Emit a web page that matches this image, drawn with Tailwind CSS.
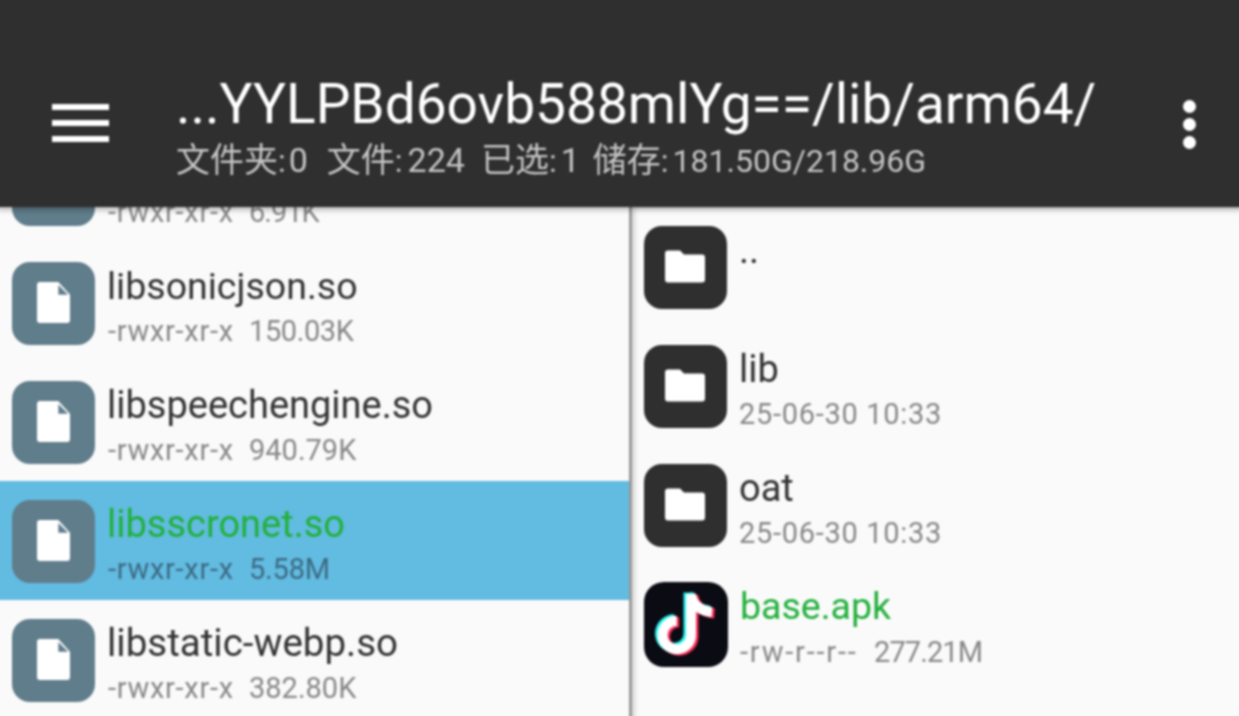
<!DOCTYPE html>
<html>
<head>
<meta charset="utf-8">
<script src="https://cdn.jsdelivr.net/npm/@tailwindcss/browser@4"></script>
</head>
<body class="m-0 overflow-hidden bg-[#fafafa]">
<div class="w-[1239px] h-[716px] overflow-hidden">
<div class="w-[1247px] h-[724px] -m-[4px] overflow-hidden flex flex-col bg-[#fafafa] font-['Roboto','Noto_Sans_CJK_SC',sans-serif] blur-[0.8px]">
  <header class="relative z-10 h-[211px] shrink-0 bg-[#2f2f2f] flex items-start pt-[4px] pl-[4px] shadow-[0_2px_6px_rgba(0,0,0,0.35)]">
    <div class="w-[177px] shrink-0 pt-[104px] pl-[52px]">
      <div class="w-[57px] h-[38px] flex flex-col justify-between">
        <div class="h-[6px] bg-white"></div><div class="h-[6px] bg-white"></div><div class="h-[6px] bg-white"></div>
      </div>
    </div>
    <div class="flex-1 min-w-0 pt-[71px]">
      <div class="text-[55px] leading-[66px] text-white whitespace-nowrap -ml-[1px]">...YYLPBd6ovb588mlYg==/lib/arm64/</div>
      <div class="flex items-baseline text-[32px] leading-[50px] text-[#c4c4c4] whitespace-nowrap -mt-[2px] -ml-[1px]">
        <span class="text-[34px]">文件夹</span><span>:</span><span class="ml-[3px] text-[34px]">0</span>
        <span class="text-[34px] ml-[19px]">文件</span><span>:</span><span class="ml-[5px] text-[34px]">224</span>
        <span class="text-[34px] ml-[16px]">已选</span><span>:</span><span class="ml-[4px] text-[34px]">1</span>
        <span class="text-[34px] ml-[13px]">储存</span><span>:</span><span class="ml-[4px]">181.50G/218.96G</span>
      </div>
    </div>
    <div class="w-[60px] shrink-0 pt-[100px] flex flex-col gap-[5px]">
      <div class="w-[13px] h-[13px] rounded-full bg-white"></div>
      <div class="w-[13px] h-[13px] rounded-full bg-white"></div>
      <div class="w-[13px] h-[13px] rounded-full bg-white"></div>
    </div>
  </header>
  <main class="flex flex-1 min-h-0">
    <section class="w-[633px] shrink-0 -mt-[83px]">
      <div class="h-[119px] flex pt-[19px] pl-[16px] gap-[12px]">
        <div class="w-[83px] h-[83px] rounded-[18px] bg-[#607d8b]"></div>
        <div class="pt-[1px]"><div class="h-[46px]"></div><div class="text-[29px] leading-[36px] text-[#888] mt-[4px] whitespace-nowrap"><span class="inline-block ml-[1px] w-[141px] tracking-[0.7px]">-rwxr-xr-x</span><span class="tracking-[-1px]">6.91K</span></div></div>
      </div>
      <div class="h-[119px] flex pt-[19px] pl-[16px] gap-[12px]">
        <div class="w-[83px] h-[83px] rounded-[18px] bg-[#607d8b] flex items-center justify-center">
          <svg class="-mt-[2px] -ml-[1px]" width="33" height="41" viewBox="0 0 34 42"><path d="M3 0H22L34 13V39a3 3 0 0 1-3 3H3a3 3 0 0 1-3-3V3a3 3 0 0 1 3-3Z" fill="#fff"/><path d="M22 3V13H32Z" fill="#607d8b"/></svg>
        </div>
        <div class="pt-[1px]"><div class="text-[37.5px] leading-[46px] text-[#333]">libsonicjson.so</div><div class="text-[29px] leading-[36px] text-[#888] mt-[4px] whitespace-nowrap"><span class="inline-block ml-[1px] w-[141px] tracking-[0.7px]">-rwxr-xr-x</span><span class="tracking-[-0.4px]">150.03K</span></div></div>
      </div>
      <div class="h-[119px] flex pt-[19px] pl-[16px] gap-[12px]">
        <div class="w-[83px] h-[83px] rounded-[18px] bg-[#607d8b] flex items-center justify-center">
          <svg class="-mt-[2px] -ml-[1px]" width="33" height="41" viewBox="0 0 34 42"><path d="M3 0H22L34 13V39a3 3 0 0 1-3 3H3a3 3 0 0 1-3-3V3a3 3 0 0 1 3-3Z" fill="#fff"/><path d="M22 3V13H32Z" fill="#607d8b"/></svg>
        </div>
        <div class="pt-[1px]"><div class="text-[38px] leading-[46px] text-[#333]">libspeechengine.so</div><div class="text-[29px] leading-[36px] text-[#888] mt-[4px] whitespace-nowrap"><span class="inline-block ml-[1px] w-[141px] tracking-[0.7px]">-rwxr-xr-x</span>940.79K</div></div>
      </div>
      <div class="h-[119px] flex pt-[19px] pl-[16px] gap-[12px] bg-[#62bbe0]">
        <div class="w-[83px] h-[83px] rounded-[18px] bg-[#607d8b] flex items-center justify-center">
          <svg class="-mt-[2px] -ml-[1px]" width="33" height="41" viewBox="0 0 34 42"><path d="M3 0H22L34 13V39a3 3 0 0 1-3 3H3a3 3 0 0 1-3-3V3a3 3 0 0 1 3-3Z" fill="#fff"/><path d="M22 3V13H32Z" fill="#607d8b"/></svg>
        </div>
        <div class="pt-[1px]"><div class="text-[38px] leading-[46px] text-[#22b03c]">libsscronet.so</div><div class="text-[29px] leading-[36px] text-[#3c6b85] mt-[4px] whitespace-nowrap"><span class="inline-block ml-[1px] w-[141px] tracking-[0.7px]">-rwxr-xr-x</span><span class="tracking-[-0.2px]">5.58M</span></div></div>
      </div>
      <div class="h-[119px] flex pt-[19px] pl-[16px] gap-[12px]">
        <div class="w-[83px] h-[83px] rounded-[18px] bg-[#607d8b] flex items-center justify-center">
          <svg class="-mt-[2px] -ml-[1px]" width="33" height="41" viewBox="0 0 34 42"><path d="M3 0H22L34 13V39a3 3 0 0 1-3 3H3a3 3 0 0 1-3-3V3a3 3 0 0 1 3-3Z" fill="#fff"/><path d="M22 3V13H32Z" fill="#607d8b"/></svg>
        </div>
        <div class="pt-[1px]"><div class="text-[38.5px] leading-[46px] text-[#333]">libstatic-webp.so</div><div class="text-[29px] leading-[36px] text-[#888] mt-[4px] whitespace-nowrap"><span class="inline-block ml-[1px] w-[141px] tracking-[0.7px]">-rwxr-xr-x</span>382.80K</div></div>
      </div>
    </section>
    <section class="flex-1 border-l-[3px] border-[#9a9a9a] shadow-[inset_3px_0_4px_rgba(0,0,0,0.15)]">
      <div class="h-[119px] flex pt-[19px] pl-[12px] gap-[12px]">
        <div class="w-[83px] h-[83px] rounded-[18px] bg-[#2f2f2f] flex items-center justify-center">
          <svg class="-mt-[2px] -ml-[1px]" width="40" height="33" viewBox="0 0 40 32"><path d="M3 0H15L19 4H37a3 3 0 0 1 3 3V29a3 3 0 0 1-3 3H3a3 3 0 0 1-3-3V3a3 3 0 0 1 3-3Z" fill="#fff"/></svg>
        </div>
        <div class="pt-[1px]"><div class="text-[38px] leading-[46px] text-[#333]">..</div></div>
      </div>
      <div class="h-[119px] flex pt-[19px] pl-[12px] gap-[12px]">
        <div class="w-[83px] h-[83px] rounded-[18px] bg-[#2f2f2f] flex items-center justify-center">
          <svg class="-mt-[2px] -ml-[1px]" width="40" height="33" viewBox="0 0 40 32"><path d="M3 0H15L19 4H37a3 3 0 0 1 3 3V29a3 3 0 0 1-3 3H3a3 3 0 0 1-3-3V3a3 3 0 0 1 3-3Z" fill="#fff"/></svg>
        </div>
        <div class="pt-[1px]"><div class="text-[38px] leading-[46px] text-[#333]">lib</div><div class="text-[29px] leading-[36px] text-[#888] mt-[4px] tracking-[0.7px] whitespace-nowrap">25-06-30 10:33</div></div>
      </div>
      <div class="h-[119px] flex pt-[19px] pl-[12px] gap-[12px]">
        <div class="w-[83px] h-[83px] rounded-[18px] bg-[#2f2f2f] flex items-center justify-center">
          <svg class="-mt-[2px] -ml-[1px]" width="40" height="33" viewBox="0 0 40 32"><path d="M3 0H15L19 4H37a3 3 0 0 1 3 3V29a3 3 0 0 1-3 3H3a3 3 0 0 1-3-3V3a3 3 0 0 1 3-3Z" fill="#fff"/></svg>
        </div>
        <div class="pt-[1px]"><div class="text-[38px] leading-[46px] text-[#333]">oat</div><div class="text-[29px] leading-[36px] text-[#888] mt-[4px] tracking-[0.7px] whitespace-nowrap">25-06-30 10:33</div></div>
      </div>
      <div class="h-[119px] flex pt-[18px] pl-[12px] gap-[12px]">
        <div class="w-[84px] h-[85px] rounded-[20px] bg-[#0b0b14] shrink-0">
          <svg width="84" height="85" viewBox="0 0 84 85">
            <g fill="none" stroke-width="10">
              <path d="M47 12V53a14.25 14.25 0 1 1-14.25-14.25M47 12c1 10 9 17 21 18" stroke="#25f4ee" transform="translate(-2.5 -1.5)"/>
              <path d="M47 12V53a14.25 14.25 0 1 1-14.25-14.25M47 12c1 10 9 17 21 18" stroke="#fe2c55" transform="translate(2.5 1.5)"/>
              <path d="M47 12V53a14.25 14.25 0 1 1-14.25-14.25M47 12c1 10 9 17 21 18" stroke="#fff"/>
            </g>
          </svg>
        </div>
        <div class="pt-[1px]"><div class="text-[37.5px] leading-[46px] text-[#22b03c]">base.apk</div><div class="text-[29px] leading-[36px] text-[#888] mt-[5px] whitespace-nowrap"><span class="inline-block w-[134px] tracking-[1.8px]">-rw-r--r--</span><span class="tracking-[-0.9px]">277.21M</span></div></div>
      </div>
    </section>
  </main>
</div>
</div>
</body>
</html>
